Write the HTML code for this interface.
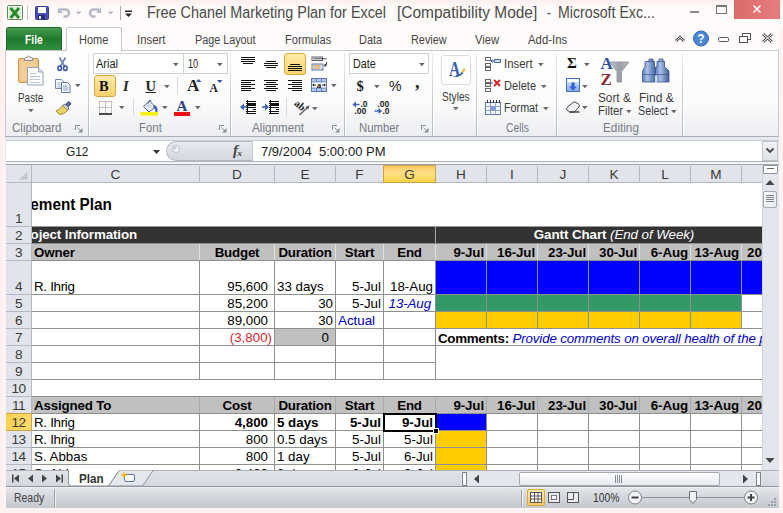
<!DOCTYPE html><html><head><meta charset="utf-8"><title>Excel</title><style>
*{box-sizing:border-box;margin:0;padding:0}
html,body{width:783px;height:513px;overflow:hidden}
body{background:#fdf3f2;font-family:"Liberation Sans",sans-serif;position:relative;color:#000}
.a{position:absolute}
.t{position:absolute;white-space:nowrap;line-height:1}
.ui{font-size:12px;color:#3b3b3b;transform-origin:0 50%}
.c{position:absolute;white-space:nowrap;font-size:13.33px;line-height:17px;height:17px;overflow:hidden}
.b{font-weight:bold}
.i{font-style:italic}
.r{text-align:right}
.ce{text-align:center}
.hl{position:absolute;height:1px;background:#c3c3c3}
.vl{position:absolute;width:1px;background:#c3c3c3}
.glab{position:absolute;font-size:12px;color:#6b7280;white-space:nowrap;line-height:1;text-align:center}
.arr{position:absolute;width:0;height:0;border-left:3px solid transparent;border-right:3px solid transparent;border-top:3px solid #666}
</style></head><body>
<div class="a" style="left:0;top:0;width:783px;height:27px;background:linear-gradient(#fdeeed,#fefaf9 7px,#fffcfb)"></div>
<div class="a" style="left:734px;top:0;width:46px;height:19px;background:linear-gradient(90deg,#dd6b6b,#e57c7c)"></div>
<svg class="a" style="left:734px;top:0" width="44" height="19"><path d="M19.500 5.500l7 7M26.500 5.500l-7 7" stroke="#fff" stroke-width="1.500" fill="none"/></svg>
<div class="a" style="left:716px;top:5px;width:11px;height:9px;border:1px solid #777;border-top:2px solid #777"></div>
<div class="a" style="left:690px;top:11px;width:9px;height:2px;background:#888"></div>
<div class="t" style="left:146.50px;top:5.04px;font-size:15.6px;color:#4a4a4a;transform-origin:0 0;transform:scaleX(0.9225);">Free Chanel Marketing Plan for Excel</div>
<div class="t" style="left:396.50px;top:5.04px;font-size:15.6px;color:#4a4a4a;transform-origin:0 0;transform:scaleX(0.9929);">[Compatibility Mode]</div>
<div class="t" style="left:546.60px;top:5.04px;font-size:15.6px;color:#4a4a4a;transform-origin:0 0;transform:scaleX(0.7429);">-</div>
<div class="t" style="left:557.50px;top:5.04px;font-size:15.6px;color:#4a4a4a;transform-origin:0 0;transform:scaleX(0.9087);">Microsoft Exc...</div>
<svg class="a" style="left:0;top:0" width="140" height="27">
<rect x="7.500" y="5.500" width="15" height="14" rx="1" fill="#f4faf0" stroke="#5d8a5a"/>
<rect x="9" y="7" width="12" height="11" fill="#dcefd6"/>
<path d="M10.500 8l8.500 10M19 8l-8.500 10" stroke="#2a8a2a" stroke-width="2.800"/>
<line x1="27.500" y1="6" x2="27.500" y2="20" stroke="#c4c4c8"/>
<rect x="35.500" y="6.500" width="13" height="13" rx="1" fill="#4a4fc0" stroke="#3a3e9a"/>
<rect x="38" y="7" width="8" height="6" fill="#fff"/>
<rect x="38" y="15" width="7" height="4.500" fill="#2a2d70"/><rect x="39" y="16" width="2" height="3" fill="#dfe3f5"/>
<path d="M60 9.500h5.500a3.500 3.500 0 0 1 0 7h-2" stroke="#b6bac8" stroke-width="2.600" fill="none"/><path d="M58 7v6h5z" fill="#b6bac8"/>
<path d="M76 11.500h5.500l-2.750 3z" fill="#b4b4b8"/>
<path d="M99 9.500h-5.500a3.500 3.500 0 0 0 0 7h2" stroke="#b6bac8" stroke-width="2.600" fill="none"/><path d="M101 7v6h-5z" fill="#b6bac8"/>
<path d="M108 11.500h5.500l-2.750 3z" fill="#b4b4b8"/>
<line x1="120.500" y1="6" x2="120.500" y2="20" stroke="#a9a9ae"/>
<rect x="125" y="10.500" width="7" height="1.500" fill="#222"/><path d="M125 13.500h7l-3.500 3.500z" fill="#222"/>
</svg>
<div class="a" style="left:0;top:27px;width:783px;height:23px;background:#fffbfa"></div>
<div class="a" style="left:0;top:0;width:3px;height:513px;background:#fdf0ef"></div>
<div class="a" style="left:6px;top:27px;width:56px;height:23px;border-radius:3px 3px 0 0;background:linear-gradient(#4a9c52,#1f7a2c 50%,#2f9040);border:1px solid #1d6b28;border-bottom:none"></div>
<div class="t" style="left:25.20px;top:33.56px;font-size:12px;color:#fff;transform-origin:0 0;transform:scaleX(0.8582);font-weight:bold;">File</div>
<div class="a" style="left:5px;top:50px;width:774px;height:86px;background:linear-gradient(#ffffff,#fbfbfc 60%,#eceef1);border:1px solid #c6c9cf;border-bottom:none"></div>
<div class="a" style="left:66px;top:27px;width:56px;height:24px;border-radius:3px 3px 0 0;background:#fff;border:1px solid #c3c6cc;border-bottom:none"></div>
<div class="t" style="left:79.40px;top:33.56px;font-size:12px;color:#454545;transform-origin:0 0;transform:scaleX(0.9187);">Home</div>
<div class="t" style="left:137.00px;top:33.56px;font-size:12px;color:#454545;transform-origin:0 0;transform:scaleX(0.9500);">Insert</div>
<div class="t" style="left:194.50px;top:33.56px;font-size:12px;color:#454545;transform-origin:0 0;transform:scaleX(0.8980);">Page Layout</div>
<div class="t" style="left:284.50px;top:33.56px;font-size:12px;color:#454545;transform-origin:0 0;transform:scaleX(0.9240);">Formulas</div>
<div class="t" style="left:359.30px;top:33.56px;font-size:12px;color:#454545;transform-origin:0 0;transform:scaleX(0.9103);">Data</div>
<div class="t" style="left:411.00px;top:33.56px;font-size:12px;color:#454545;transform-origin:0 0;transform:scaleX(0.9067);">Review</div>
<div class="t" style="left:475.40px;top:33.56px;font-size:12px;color:#454545;transform-origin:0 0;transform:scaleX(0.9314);">View</div>
<div class="t" style="left:528.00px;top:33.56px;font-size:12px;color:#454545;transform-origin:0 0;transform:scaleX(0.9474);">Add-Ins</div>
<div class="a" style="left:88px;top:53px;width:1px;height:83px;background:linear-gradient(#eceef1,#c6cad1 60%,#b4b8c0);"></div>
<div class="a" style="left:89px;top:53px;width:1px;height:83px;background:linear-gradient(rgba(255,255,255,0),#fff 60%);"></div>
<div class="a" style="left:230px;top:53px;width:1px;height:83px;background:linear-gradient(#eceef1,#c6cad1 60%,#b4b8c0);"></div>
<div class="a" style="left:231px;top:53px;width:1px;height:83px;background:linear-gradient(rgba(255,255,255,0),#fff 60%);"></div>
<div class="a" style="left:344px;top:53px;width:1px;height:83px;background:linear-gradient(#eceef1,#c6cad1 60%,#b4b8c0);"></div>
<div class="a" style="left:345px;top:53px;width:1px;height:83px;background:linear-gradient(rgba(255,255,255,0),#fff 60%);"></div>
<div class="a" style="left:432px;top:53px;width:1px;height:83px;background:linear-gradient(#eceef1,#c6cad1 60%,#b4b8c0);"></div>
<div class="a" style="left:433px;top:53px;width:1px;height:83px;background:linear-gradient(rgba(255,255,255,0),#fff 60%);"></div>
<div class="a" style="left:476px;top:53px;width:1px;height:83px;background:linear-gradient(#eceef1,#c6cad1 60%,#b4b8c0);"></div>
<div class="a" style="left:477px;top:53px;width:1px;height:83px;background:linear-gradient(rgba(255,255,255,0),#fff 60%);"></div>
<div class="a" style="left:556px;top:53px;width:1px;height:83px;background:linear-gradient(#eceef1,#c6cad1 60%,#b4b8c0);"></div>
<div class="a" style="left:557px;top:53px;width:1px;height:83px;background:linear-gradient(rgba(255,255,255,0),#fff 60%);"></div>
<div class="a" style="left:682px;top:53px;width:1px;height:83px;background:linear-gradient(#eceef1,#c6cad1 60%,#b4b8c0);"></div>
<div class="a" style="left:683px;top:53px;width:1px;height:83px;background:linear-gradient(rgba(255,255,255,0),#fff 60%);"></div>
<div class="t" style="left:11.50px;top:121.96px;font-size:12px;color:#767b84;transform-origin:0 0;transform:scaleX(0.9635);">Clipboard</div>
<svg class="a" style="left:75px;top:125px" width="8" height="8"><path d="M0.500 5v-4.500h4.500" stroke="#8a8f98" fill="none"/><path d="M3 7.500h4.500v-4.500z" fill="#8a8f98"/><path d="M2.500 2.500l3.500 3.500" stroke="#8a8f98"/></svg>
<div class="t" style="left:138.70px;top:121.96px;font-size:12px;color:#767b84;transform-origin:0 0;transform:scaleX(0.9500);">Font</div>
<svg class="a" style="left:218.5px;top:125px" width="8" height="8"><path d="M0.500 5v-4.500h4.500" stroke="#8a8f98" fill="none"/><path d="M3 7.500h4.500v-4.500z" fill="#8a8f98"/><path d="M2.500 2.500l3.500 3.500" stroke="#8a8f98"/></svg>
<div class="t" style="left:251.50px;top:121.96px;font-size:12px;color:#767b84;transform-origin:0 0;transform:scaleX(0.9742);">Alignment</div>
<svg class="a" style="left:331.5px;top:125px" width="8" height="8"><path d="M0.500 5v-4.500h4.500" stroke="#8a8f98" fill="none"/><path d="M3 7.500h4.500v-4.500z" fill="#8a8f98"/><path d="M2.500 2.500l3.500 3.500" stroke="#8a8f98"/></svg>
<div class="t" style="left:358.70px;top:121.96px;font-size:12px;color:#767b84;transform-origin:0 0;transform:scaleX(0.9455);">Number</div>
<svg class="a" style="left:420.5px;top:125px" width="8" height="8"><path d="M0.500 5v-4.500h4.500" stroke="#8a8f98" fill="none"/><path d="M3 7.500h4.500v-4.500z" fill="#8a8f98"/><path d="M2.500 2.500l3.500 3.500" stroke="#8a8f98"/></svg>
<div class="t" style="left:505.70px;top:121.96px;font-size:12px;color:#767b84;transform-origin:0 0;transform:scaleX(0.8638);">Cells</div>
<div class="t" style="left:602.60px;top:121.96px;font-size:12px;color:#767b84;transform-origin:0 0;transform:scaleX(0.9796);">Editing</div>
<svg class="a" style="left:16px;top:54px" width="30" height="34"><rect x="2.500" y="4.500" width="20" height="24" rx="1.500" fill="#efc382" stroke="#c79a4c"/><rect x="4.500" y="6.500" width="16" height="20" fill="#f3cf97"/><path d="M8.500 6.500v-2q0-1 1-1h1.500q0-1.500 1.500-1.500t1.500 1.500h1.500q1 0 1 1v2z" fill="#f0f0f0" stroke="#8a8a8a"/><path d="M11.500 13.500h11l4.500 4.500v13h-15.500z" fill="#fdfdfe" stroke="#93a3c4"/><path d="M22.500 13.500v4.500h4.500" fill="#dfe6f3" stroke="#93a3c4"/><path d="M14 19.500h7M14 22.500h10M14 25.500h10M14 28.500h10" stroke="#bcc8e0"/></svg>
<div class="t" style="left:18.00px;top:92.46px;font-size:12px;color:#3b3b3b;transform-origin:0 0;transform:scaleX(0.8261);">Paste</div>
<svg class="a" style="left:27.5px;top:108.9px" width="6" height="4"><path d="M0 0h5.600l-2.800 3.200z" fill="#666"/></svg>
<svg class="a" style="left:56px;top:56px" width="14" height="16"><path d="M3.500 1.500l5.500 9.500M9.500 1.500l-5.500 9.500" stroke="#6f86b8" stroke-width="1.700" fill="none"/><ellipse cx="3.700" cy="12.200" rx="1.800" ry="2.200" fill="none" stroke="#2f4fa8" stroke-width="1.500"/><ellipse cx="9.300" cy="12.200" rx="1.800" ry="2.200" fill="none" stroke="#2f4fa8" stroke-width="1.500"/></svg>
<svg class="a" style="left:55px;top:78px" width="17" height="15"><path d="M0.500 1.500h6l2.500 2.500v6.500h-8.500z" fill="#fff" stroke="#7189bd"/><path d="M2 5h4M2 7h5M2 9h5" stroke="#9fb2d8"/><path d="M6.500 4.500h6l2.500 2.500v7.500h-8.500z" fill="#fff" stroke="#5c76b0"/><path d="M8 8h4M8 10h5.500M8 12h5.500" stroke="#7d95c8"/></svg>
<svg class="a" style="left:74.8px;top:83.8px" width="6" height="4"><path d="M0 0h5.600l-2.800 3.200z" fill="#666"/></svg>
<svg class="a" style="left:55px;top:100px" width="17" height="16"><path d="M10.500 4.500l3.500-3 2 2.500-3.500 3z" fill="#5a6797" stroke="#3c4878"/><path d="M7.500 5.500l2.500-1.500 4 4-1.500 2.500z" fill="#c9ccd6" stroke="#6a7088"/><path d="M7.500 5.500l5 5q-3 4-8 4l-3.500-3.500q4-1 6.500-5.500z" fill="#efd46a" stroke="#a8882a"/></svg>
<div class="a" style="left:93px;top:53px;width:91px;height:21px;background:#fff;border:1px solid #cdd1d8"></div>
<div class="a" style="left:183px;top:53px;width:45px;height:21px;background:#fff;border:1px solid #cdd1d8"></div>
<div class="t" style="left:96.30px;top:58.26px;font-size:12px;color:#222;transform-origin:0 0;transform:scaleX(0.9167);">Arial</div>
<svg class="a" style="left:173.2px;top:62.5px" width="6" height="4"><path d="M0 0h5.600l-2.800 3.200z" fill="#666"/></svg>
<div class="t" style="left:188.20px;top:58.26px;font-size:12px;color:#222;transform-origin:0 0;transform:scaleX(0.7551);">10</div>
<svg class="a" style="left:216.7px;top:62.5px" width="6" height="4"><path d="M0 0h5.600l-2.800 3.200z" fill="#666"/></svg>
<div class="a" style="left:93.5px;top:75px;width:22.5px;height:22px;background:linear-gradient(#fde9a9,#fbd36e);border:1px solid #d8a944;border-radius:3px"></div>
<div class="t" style="left:99px;top:79px;font-family:'Liberation Serif',serif;font-weight:bold;font-size:14.5px;color:#111">B</div>
<div class="t" style="left:123px;top:79px;font-family:'Liberation Serif',serif;font-style:italic;font-weight:bold;font-size:14.5px;color:#222">I</div>
<div class="t" style="left:145.500px;top:79px;font-family:'Liberation Serif',serif;font-weight:bold;font-size:14.5px;color:#222;text-decoration:underline">U</div>
<svg class="a" style="left:164.2px;top:84.5px" width="6" height="4"><path d="M0 0h5.600l-2.800 3.200z" fill="#666"/></svg>
<div class="a" style="left:177px;top:77px;width:1px;height:18px;background:#d5d8de;"></div>
<div class="t" style="left:187px;top:77px;font-family:'Liberation Serif',serif;font-weight:bold;font-size:17px;color:#222">A</div>
<svg class="a" style="left:196px;top:78.500px" width="6" height="4"><path d="M0 3h5.500l-2.750-3z" fill="#3557a5"/></svg>
<div class="t" style="left:209.500px;top:82.500px;font-family:'Liberation Serif',serif;font-weight:bold;font-size:11.500px;color:#222">A</div>
<svg class="a" style="left:216.500px;top:79.500px" width="6" height="4"><path d="M0 0h5.500l-2.750 3z" fill="#3557a5"/></svg>
<svg class="a" style="left:99px;top:101px" width="14" height="14"><path d="M0.500 0.500h12v12M0.500 0.500v12M6.500 0.500v12M0.500 6.500h12" stroke="#8a8a8a" stroke-dasharray="1 1" fill="none"/><path d="M0 13h13" stroke="#111" stroke-width="1.500"/></svg>
<svg class="a" style="left:118.7px;top:106px" width="6" height="4"><path d="M0 0h5.600l-2.800 3.200z" fill="#666"/></svg>
<div class="a" style="left:132.5px;top:98px;width:1px;height:18px;background:#d5d8de;"></div>
<svg class="a" style="left:140px;top:99px" width="20" height="18"><path d="M3.500 7.500l6-5.500 6 6-6.500 5z" fill="#f2f5fb" stroke="#44588a"/><path d="M5.500 8l4-3.500 4.500 4.500z" fill="#c9d6ee"/><path d="M8 4.500q0.500-4 3.500-2.500" fill="none" stroke="#44588a"/><path d="M14.500 6q3.500 1.500 3 6.500q-1.200 1-2.200 0q0.200-3-2.300-5z" fill="#3f5fb5"/><rect x="0.500" y="13" width="17.500" height="3.600" fill="#f6ef12"/></svg>
<svg class="a" style="left:161.7px;top:106px" width="6" height="4"><path d="M0 0h5.600l-2.800 3.200z" fill="#666"/></svg>
<div class="t" style="left:176.500px;top:98.500px;font-family:'Liberation Serif',serif;font-weight:bold;font-size:15px;color:#2a3f7e">A</div>
<div class="a" style="left:174px;top:112px;width:16px;height:3.6px;background:#ee1111;"></div>
<svg class="a" style="left:194.7px;top:106px" width="6" height="4"><path d="M0 0h5.600l-2.800 3.200z" fill="#666"/></svg>
<div class="a" style="left:241px;top:57px;width:14px;height:1px;background:#111;"></div>
<div class="a" style="left:241px;top:59px;width:14px;height:1px;background:#111;"></div>
<div class="a" style="left:241px;top:61px;width:14px;height:1px;background:#111;"></div>
<div class="a" style="left:243px;top:63px;width:10px;height:1px;background:#111;"></div>
<div class="a" style="left:266px;top:61px;width:10px;height:1px;background:#111;"></div>
<div class="a" style="left:264px;top:63px;width:14px;height:1px;background:#111;"></div>
<div class="a" style="left:264px;top:65px;width:14px;height:1px;background:#111;"></div>
<div class="a" style="left:266px;top:67px;width:10px;height:1px;background:#111;"></div>
<div class="a" style="left:283.5px;top:53px;width:22px;height:22px;background:linear-gradient(#fde9a9,#fbd36e);border:1px solid #d8a944;border-radius:3px"></div>
<div class="a" style="left:289.5px;top:64px;width:10px;height:1px;background:#111;"></div>
<div class="a" style="left:287.5px;top:66px;width:14px;height:1px;background:#111;"></div>
<div class="a" style="left:287.5px;top:68px;width:14px;height:1px;background:#111;"></div>
<div class="a" style="left:287.5px;top:70px;width:14px;height:1px;background:#111;"></div>
<svg class="a" style="left:311px;top:55px" width="18" height="17"><rect x="1" y="2" width="10.500" height="3.500" fill="#fff" stroke="#5a6070"/><path d="M2.500 3.750h13" stroke="#444"/><rect x="1" y="9" width="11" height="6" fill="#dbe6f7" stroke="#5a78a8"/><path d="M2.500 10.800h7M2.500 13h7" stroke="#e8a030" stroke-width="1.200"/><path d="M15.500 7v3l-2 0" stroke="#444" fill="none"/><path d="M12.500 10.500l2.500-1.800v3.200z" fill="#444"/></svg>
<div class="a" style="left:241px;top:80px;width:14px;height:1px;background:#111;"></div>
<div class="a" style="left:241px;top:82px;width:10px;height:1px;background:#111;"></div>
<div class="a" style="left:241px;top:84px;width:14px;height:1px;background:#111;"></div>
<div class="a" style="left:241px;top:86px;width:10px;height:1px;background:#111;"></div>
<div class="a" style="left:241px;top:88px;width:14px;height:1px;background:#111;"></div>
<div class="a" style="left:241px;top:90px;width:10px;height:1px;background:#111;"></div>
<div class="a" style="left:264px;top:80px;width:14px;height:1px;background:#111;"></div>
<div class="a" style="left:266px;top:82px;width:10px;height:1px;background:#111;"></div>
<div class="a" style="left:264px;top:84px;width:14px;height:1px;background:#111;"></div>
<div class="a" style="left:266px;top:86px;width:10px;height:1px;background:#111;"></div>
<div class="a" style="left:264px;top:88px;width:14px;height:1px;background:#111;"></div>
<div class="a" style="left:266px;top:90px;width:10px;height:1px;background:#111;"></div>
<div class="a" style="left:287.5px;top:80px;width:14px;height:1px;background:#111;"></div>
<div class="a" style="left:291.5px;top:82px;width:10px;height:1px;background:#111;"></div>
<div class="a" style="left:287.5px;top:84px;width:14px;height:1px;background:#111;"></div>
<div class="a" style="left:291.5px;top:86px;width:10px;height:1px;background:#111;"></div>
<div class="a" style="left:287.5px;top:88px;width:14px;height:1px;background:#111;"></div>
<div class="a" style="left:291.5px;top:90px;width:10px;height:1px;background:#111;"></div>
<svg class="a" style="left:311px;top:78px" width="18" height="16"><rect x="0.500" y="0.500" width="15" height="13" fill="#b4c9ec" stroke="#5a78b8"/><path d="M0.500 4h15M0.500 10h15M5.500 0.500v3.500M10.500 0.500v3.500M5.500 10v3.500M10.500 10v3.500" stroke="#5f7ebc"/><rect x="1" y="4.500" width="14" height="5" fill="#fff"/><text x="8" y="9.500" font-size="9" font-weight="bold" text-anchor="middle" font-family="Liberation Serif,serif" fill="#111">a</text><path d="M1.500 7h3.500M11 7h3.500" stroke="#222"/><path d="M1.500 7l1.500-1.500v3zM14.500 7l-1.500-1.500v3z" fill="#222"/></svg>
<svg class="a" style="left:331px;top:84px" width="6" height="4"><path d="M0 0h5.600l-2.800 3.200z" fill="#666"/></svg>
<div class="a" style="left:246px;top:101px;width:10px;height:1px;background:#111;"></div>
<div class="a" style="left:246px;top:103px;width:10px;height:1px;background:#111;"></div>
<div class="a" style="left:246px;top:105px;width:10px;height:1px;background:#111;"></div>
<div class="a" style="left:246px;top:107px;width:10px;height:1px;background:#111;"></div>
<div class="a" style="left:246px;top:109px;width:10px;height:1px;background:#111;"></div>
<div class="a" style="left:246px;top:111px;width:10px;height:1px;background:#111;"></div>
<div class="a" style="left:246px;top:113px;width:10px;height:1px;background:#111;"></div>
<div class="a" style="left:248px;top:103px;width:8px;height:3px;background:#111;"></div>
<div class="a" style="left:248px;top:109px;width:5px;height:1px;background:#fff;"></div>
<div class="a" style="left:247px;top:100px;width:1px;height:1px;background:#111;"></div>
<div class="a" style="left:247px;top:102px;width:1px;height:1px;background:#111;"></div>
<div class="a" style="left:247px;top:104px;width:1px;height:1px;background:#111;"></div>
<div class="a" style="left:247px;top:106px;width:1px;height:1px;background:#111;"></div>
<div class="a" style="left:247px;top:108px;width:1px;height:1px;background:#111;"></div>
<div class="a" style="left:247px;top:110px;width:1px;height:1px;background:#111;"></div>
<div class="a" style="left:247px;top:112px;width:1px;height:1px;background:#111;"></div>
<div class="a" style="left:268.5px;top:101px;width:10px;height:1px;background:#111;"></div>
<div class="a" style="left:268.5px;top:103px;width:10px;height:1px;background:#111;"></div>
<div class="a" style="left:268.5px;top:105px;width:10px;height:1px;background:#111;"></div>
<div class="a" style="left:268.5px;top:107px;width:10px;height:1px;background:#111;"></div>
<div class="a" style="left:268.5px;top:109px;width:10px;height:1px;background:#111;"></div>
<div class="a" style="left:268.5px;top:111px;width:10px;height:1px;background:#111;"></div>
<div class="a" style="left:268.5px;top:113px;width:10px;height:1px;background:#111;"></div>
<div class="a" style="left:270.5px;top:103px;width:8px;height:3px;background:#111;"></div>
<div class="a" style="left:270.5px;top:109px;width:5px;height:1px;background:#fff;"></div>
<div class="a" style="left:269.5px;top:100px;width:1px;height:1px;background:#111;"></div>
<div class="a" style="left:269.5px;top:102px;width:1px;height:1px;background:#111;"></div>
<div class="a" style="left:269.5px;top:104px;width:1px;height:1px;background:#111;"></div>
<div class="a" style="left:269.5px;top:106px;width:1px;height:1px;background:#111;"></div>
<div class="a" style="left:269.5px;top:108px;width:1px;height:1px;background:#111;"></div>
<div class="a" style="left:269.5px;top:110px;width:1px;height:1px;background:#111;"></div>
<div class="a" style="left:269.5px;top:112px;width:1px;height:1px;background:#111;"></div>
<svg class="a" style="left:240px;top:103px" width="7" height="8"><path d="M7 4h-5" stroke="#3b62b8" stroke-width="1.600"/><path d="M4 0.500l-4 3.500 4 3.500z" fill="#3b62b8"/></svg>
<svg class="a" style="left:262px;top:103px" width="7" height="8"><path d="M0 4h5" stroke="#3b62b8" stroke-width="1.600"/><path d="M3 0.500l4 3.500-4 3.500z" fill="#3b62b8"/></svg>
<div class="a" style="left:285.5px;top:98px;width:1px;height:18px;background:#d5d8de;"></div>
<svg class="a" style="left:293px;top:98px;overflow:visible" width="20" height="19"><text x="0" y="0" font-size="10.500" font-weight="bold" font-family="Liberation Serif,serif" fill="#1a1a1a" transform="translate(0.500 6.500) rotate(40)">ab</text><path d="M6.500 17l8-7.500" stroke="#555" stroke-width="1.200"/><path d="M16.500 7.500l-4 1.200 2.800 2.800z" fill="#555"/></svg>
<svg class="a" style="left:312.2px;top:106.5px" width="6" height="4"><path d="M0 0h5.600l-2.800 3.200z" fill="#666"/></svg>
<div class="a" style="left:349px;top:53px;width:80px;height:21px;background:#fff;border:1px solid #cdd1d8"></div>
<div class="t" style="left:352.80px;top:58.26px;font-size:12px;color:#222;transform-origin:0 0;transform:scaleX(0.8946);">Date</div>
<svg class="a" style="left:418.7px;top:62.5px" width="6" height="4"><path d="M0 0h5.600l-2.800 3.200z" fill="#666"/></svg>
<div class="t" style="left:356.500px;top:79px;font-family:'Liberation Serif',serif;font-weight:bold;font-size:14.5px;color:#222">$</div>
<svg class="a" style="left:373.8px;top:84.5px" width="6" height="4"><path d="M0 0h5.600l-2.800 3.200z" fill="#666"/></svg>
<div class="t" style="left:389px;top:79px;font-size:14px;color:#222">%</div>
<div class="t" style="left:415px;top:73px;font-family:'Liberation Serif',serif;font-weight:bold;font-size:18px;color:#222">,</div>
<svg class="a" style="left:352px;top:100px" width="40" height="15" font-family="Liberation Sans,sans-serif" font-size="8.500" font-weight="bold" fill="#222"><path d="M1.500 4.500h6" stroke="#3b62b8" stroke-width="1.400"/><path d="M4 1.500l-3.500 3 3.500 3z" fill="#3b62b8"/><text x="8.500" y="7">.0</text><text x="2.500" y="14">.00</text><text x="25.500" y="7">.00</text><path d="M22.500 11h6" stroke="#3b62b8" stroke-width="1.400"/><path d="M26.500 8l3.500 3-3.500 3z" fill="#3b62b8"/><text x="30.500" y="14">.0</text></svg>
<div class="a" style="left:440.5px;top:54.5px;width:30px;height:30px;background:#fff;border:1px solid #d9dce2;border-radius:3px"></div>
<div class="t" style="left:448.500px;top:58.500px;font-family:'Liberation Serif',serif;font-weight:bold;font-size:21px;color:#3a5fb0;transform-origin:0 0;transform:scaleX(.74)">A</div>
<svg class="a" style="left:452px;top:66px" width="14" height="12"><path d="M1 10.500q5 0.500 9-5l1.500 1.500q-4 5-10.500 4z" fill="#3f63b5"/><path d="M9.500 5.500l2.500-3.500 1.500 1.500-2.500 3.500z" fill="#e8b93a"/></svg>
<div class="t" style="left:441.80px;top:91.46px;font-size:12px;color:#3b3b3b;transform-origin:0 0;transform:scaleX(0.8460);">Styles</div>
<svg class="a" style="left:452.8px;top:106.5px" width="6" height="4"><path d="M0 0h5.600l-2.800 3.200z" fill="#666"/></svg>
<svg class="a" style="left:484px;top:56px" width="18" height="16"><rect x="1.500" y="1.500" width="5" height="3" fill="#fff" stroke="#666"/><rect x="1.500" y="7.500" width="5" height="3" fill="#fff" stroke="#666"/><rect x="1.500" y="11.500" width="5" height="3" fill="#fff" stroke="#666"/><rect x="10.500" y="3.500" width="6" height="3" fill="#cfe0f7" stroke="#4a6fb5"/><path d="M10 5h-3M8.500 3.500l-1.500 1.500 1.500 1.500" stroke="#2b4fa0" fill="none"/></svg>
<svg class="a" style="left:484px;top:78px" width="18" height="16"><rect x="1.500" y="1.500" width="5" height="3" fill="#fff" stroke="#666"/><rect x="1.500" y="5.500" width="5" height="3" fill="#dfe6f3" stroke="#666"/><rect x="1.500" y="10.500" width="5" height="3" fill="#fff" stroke="#666"/><path d="M10 2l6 6M16 2l-6 6" stroke="#e02020" stroke-width="1.800"/><path d="M7 5h2" stroke="#2b4fa0"/></svg>
<svg class="a" style="left:484px;top:99px" width="18" height="17"><rect x="1.500" y="3.500" width="15" height="12" fill="#f4f7fc" stroke="#5a78b8"/><path d="M1.500 7.500h15M1.500 11.500h15M6.500 3.500v12M11.500 3.500v12" stroke="#8ea4d2"/><rect x="6.500" y="7.500" width="5" height="4" fill="#7d98d8"/><path d="M3.500 1v3M6.500 1v3M9.500 1v3M12.500 1v3M15.500 1v3" stroke="#333"/></svg>
<div class="t" style="left:504.40px;top:57.96px;font-size:12px;color:#3b3b3b;transform-origin:0 0;transform:scaleX(0.9533);">Insert</div>
<svg class="a" style="left:538px;top:62.5px" width="6" height="4"><path d="M0 0h5.600l-2.800 3.200z" fill="#666"/></svg>
<div class="t" style="left:504.40px;top:79.96px;font-size:12px;color:#3b3b3b;transform-origin:0 0;transform:scaleX(0.9237);">Delete</div>
<svg class="a" style="left:541.2px;top:84.5px" width="6" height="4"><path d="M0 0h5.600l-2.800 3.200z" fill="#666"/></svg>
<div class="t" style="left:504.40px;top:102.26px;font-size:12px;color:#3b3b3b;transform-origin:0 0;transform:scaleX(0.8974);">Format</div>
<svg class="a" style="left:543.2px;top:106.5px" width="6" height="4"><path d="M0 0h5.600l-2.800 3.200z" fill="#666"/></svg>
<div class="t" style="left:567px;top:56px;font-family:'Liberation Serif',serif;font-weight:bold;font-size:15px;color:#111">&Sigma;</div>
<svg class="a" style="left:584.2px;top:62.5px" width="6" height="4"><path d="M0 0h5.600l-2.800 3.200z" fill="#666"/></svg>
<svg class="a" style="left:565.500px;top:78px" width="15" height="15"><defs><linearGradient id="fd" x1="0" y1="0" x2="0" y2="1"><stop offset="0" stop-color="#e6effc"/><stop offset="1" stop-color="#7fa8e8"/></linearGradient></defs><rect x="0.500" y="0.500" width="13" height="13" fill="url(#fd)" stroke="#4a6fb5"/><rect x="1.500" y="1.500" width="11" height="2.500" fill="#fff"/><path d="M5.500 4.500h3v4h2.500l-4 4-4-4h2.500z" fill="#2f63c8"/></svg>
<svg class="a" style="left:582.2px;top:84.5px" width="6" height="4"><path d="M0 0h5.600l-2.800 3.200z" fill="#666"/></svg>
<svg class="a" style="left:565px;top:101px" width="17" height="13"><path d="M8 1.500q1.500-1 3 0l3 2q1 1 0 2.500l-4.500 5h-5l-2.500-2q-1-1.500 0-2.500z" fill="#f4f5f8" stroke="#444"/><path d="M4.500 11h10" stroke="#333" stroke-width="1.300"/></svg>
<svg class="a" style="left:582.2px;top:106px" width="6" height="4"><path d="M0 0h5.600l-2.800 3.200z" fill="#666"/></svg>
<svg class="a" style="left:608px;top:60px" width="24" height="24"><defs><linearGradient id="fn" x1="0" y1="0" x2="1" y2="0"><stop offset="0" stop-color="#c4c7ce"/><stop offset="0.500" stop-color="#9a9ea7"/><stop offset="1" stop-color="#b9bcc4"/></linearGradient></defs><path d="M1.500 2h19.500l-7.500 9.500v10.500h-4.500v-10.500z" fill="url(#fn)" stroke="#8b8f98" stroke-width="0.800"/></svg>
<div class="t" style="left:600.500px;top:55px;font-family:'Liberation Serif',serif;font-weight:bold;font-size:17px;color:#2b4fa0;text-shadow:0 0 1px #fff">A</div>
<div class="t" style="left:600.500px;top:70.500px;font-family:'Liberation Serif',serif;font-weight:bold;font-size:17px;color:#8a3030">Z</div>
<div class="t" style="left:598.00px;top:92.46px;font-size:12px;color:#3b3b3b;transform-origin:0 0;transform:scaleX(0.9828);">Sort &amp;</div>
<div class="t" style="left:598.00px;top:105.46px;font-size:12px;color:#3b3b3b;transform-origin:0 0;transform:scaleX(0.9390);">Filter</div>
<svg class="a" style="left:626.2px;top:110px" width="6" height="4"><path d="M0 0h5.600l-2.800 3.200z" fill="#666"/></svg>
<svg class="a" style="left:641px;top:58px" width="30" height="26"><defs><linearGradient id="bn" x1="0" y1="0" x2="1" y2="0"><stop offset="0" stop-color="#5f7fbe"/><stop offset="0.350" stop-color="#a9c0e6"/><stop offset="1" stop-color="#3f5f9e"/></linearGradient></defs><g fill="url(#bn)" stroke="#3a548c" stroke-width="0.800"><rect x="12" y="9" width="6" height="7"/><path d="M8 1h4v2.500h1.500v5l1.500 2v13.500h-13.500v-11l2.500-4.500v-5h4z"/><path d="M18 1h4v2.500h1.500v5l4.500 4.500v11h-13.500v-13.500l1.500-2v-5h2z"/></g><path d="M2 16.500h12.500M15.500 16.500h12.500M6.500 3.500h7M16.500 3.500h7" stroke="#3a548c" stroke-width="0.700"/><path d="M15 17.500v7.500" stroke="#f6f7f9" stroke-width="1.600"/></svg>
<div class="t" style="left:639.00px;top:92.46px;font-size:12px;color:#3b3b3b;transform-origin:0 0;transform:scaleX(1.0051);">Find &amp;</div>
<div class="t" style="left:638.00px;top:105.46px;font-size:12px;color:#3b3b3b;transform-origin:0 0;transform:scaleX(0.8989);">Select</div>
<svg class="a" style="left:671.2px;top:110px" width="6" height="4"><path d="M0 0h5.600l-2.800 3.200z" fill="#666"/></svg>
<svg class="a" style="left:674px;top:30px" width="104" height="18"><path d="M2 11l4-4 4 4" stroke="#555" stroke-width="2.600" fill="none"/><path d="M2 11l4-4 4 4" stroke="#fff" stroke-width="0.800" fill="none"/><path d="M2.500 11.500h8" stroke="#999" stroke-width="0"/><circle cx="27" cy="8.500" r="7.500" fill="#4a86d8" stroke="#2f66b8"/><text x="27" y="13" font-size="12" font-weight="bold" text-anchor="middle" fill="#fff" font-family="Liberation Sans,sans-serif">?</text><rect x="44.500" y="7.500" width="10" height="4" rx="1" fill="#fff" stroke="#555"/><rect x="68.500" y="3.500" width="8" height="6" fill="#fff" stroke="#555"/><rect x="65.500" y="6.500" width="8" height="6" fill="#fff" stroke="#555"/><path d="M89 4l9 8M98 4l-9 8" stroke="#555" stroke-width="3"/><path d="M89 4l9 8M98 4l-9 8" stroke="#fff" stroke-width="1"/></svg>
<div class="a" style="left:5px;top:137px;width:774px;height:28px;background:#e6e9ee;"></div>
<div class="a" style="left:5px;top:136px;width:774px;height:1px;background:#a9adb5;"></div>
<div class="a" style="left:6px;top:141px;width:756px;height:20px;background:#fff;"></div>
<div class="a" style="left:6px;top:140px;width:773px;height:1px;background:#c9cdd4;"></div>
<div class="a" style="left:6px;top:161px;width:773px;height:1px;background:#b0b5bd;"></div>
<div class="a" style="left:6px;top:162px;width:773px;height:2px;background:#f3f4f7;"></div>
<div class="a" style="left:6px;top:164px;width:773px;height:1px;background:#a2a7b0;"></div>
<div class="t" style="left:65.50px;top:145.38px;font-size:13.33px;color:#222;transform-origin:0 0;transform:scaleX(0.8911);">G12</div>
<svg class="a" style="left:153px;top:150px" width="8" height="5"><path d="M0 0h7l-3.500 4z" fill="#333"/></svg>
<div class="a" style="left:166px;top:141px;width:86px;height:20px;background:linear-gradient(#e6e9ee,#d4d8df);border:1px solid #b4b8c0;border-right:none;border-radius:10px 0 0 10px"></div>
<svg class="a" style="left:170px;top:143px" width="12" height="12"><circle cx="6" cy="6" r="3.500" fill="#f4f5f7" stroke="#b9bdc5"/><circle cx="5" cy="5" r="1.500" fill="#c9ccd3"/></svg>
<div class="t" style="left:233px;top:143px;font-family:'Liberation Serif',serif;font-style:italic;font-weight:bold;font-size:15px;color:#444">f<span style="font-size:9px;position:relative;top:0.5px;left:-0.5px">x</span></div>
<div class="a" style="left:252px;top:141px;width:1px;height:20px;background:#c9cdd4;"></div>
<div class="t" style="left:260.70px;top:145.38px;font-size:13.33px;color:#1a1a1a;transform-origin:0 0;transform:scaleX(0.9775);white-space:pre;">7/9/2004  5:00:00 PM</div>
<div class="a" style="left:762px;top:141px;width:16px;height:20px;background:linear-gradient(#f1f2f5,#dfe2e8);border:1px solid #c0c4cb"></div>
<svg class="a" style="left:765px;top:147px" width="10" height="8"><path d="M1.500 1.500l3.500 3.500 3.500-3.500" stroke="#444" stroke-width="1.800" fill="none"/></svg>
<div class="a" style="left:6px;top:165px;width:756px;height:305px;background:#fff"></div>
<div class="a" style="left:6px;top:165px;width:756px;height:18px;background:#e1e5eb;"></div>
<div class="a" style="left:6px;top:183px;width:26px;height:287px;background:#e1e5eb;"></div>
<div class="a" style="left:6px;top:182px;width:756px;height:1px;background:#b4b9c1;"></div>
<div class="a" style="left:31px;top:165px;width:1px;height:305px;background:#b4b9c1;"></div>
<div class="a" style="left:199px;top:166px;width:1px;height:16px;background:#b4b9c1;"></div>
<div class="a" style="left:274px;top:166px;width:1px;height:16px;background:#b4b9c1;"></div>
<div class="a" style="left:335px;top:166px;width:1px;height:16px;background:#b4b9c1;"></div>
<div class="a" style="left:383px;top:166px;width:1px;height:16px;background:#b4b9c1;"></div>
<div class="a" style="left:435px;top:166px;width:1px;height:16px;background:#b4b9c1;"></div>
<div class="a" style="left:486px;top:166px;width:1px;height:16px;background:#b4b9c1;"></div>
<div class="a" style="left:537px;top:166px;width:1px;height:16px;background:#b4b9c1;"></div>
<div class="a" style="left:588px;top:166px;width:1px;height:16px;background:#b4b9c1;"></div>
<div class="a" style="left:639px;top:166px;width:1px;height:16px;background:#b4b9c1;"></div>
<div class="a" style="left:690px;top:166px;width:1px;height:16px;background:#b4b9c1;"></div>
<div class="a" style="left:741px;top:166px;width:1px;height:16px;background:#b4b9c1;"></div>
<div class="a" style="left:6px;top:226px;width:25px;height:1px;background:#b4b9c1;"></div>
<div class="a" style="left:6px;top:243px;width:25px;height:1px;background:#b4b9c1;"></div>
<div class="a" style="left:6px;top:260px;width:25px;height:1px;background:#b4b9c1;"></div>
<div class="a" style="left:6px;top:294px;width:25px;height:1px;background:#b4b9c1;"></div>
<div class="a" style="left:6px;top:311px;width:25px;height:1px;background:#b4b9c1;"></div>
<div class="a" style="left:6px;top:328px;width:25px;height:1px;background:#b4b9c1;"></div>
<div class="a" style="left:6px;top:345px;width:25px;height:1px;background:#b4b9c1;"></div>
<div class="a" style="left:6px;top:362px;width:25px;height:1px;background:#b4b9c1;"></div>
<div class="a" style="left:6px;top:379px;width:25px;height:1px;background:#b4b9c1;"></div>
<div class="a" style="left:6px;top:396px;width:25px;height:1px;background:#b4b9c1;"></div>
<div class="a" style="left:6px;top:413px;width:25px;height:1px;background:#b4b9c1;"></div>
<div class="a" style="left:6px;top:430px;width:25px;height:1px;background:#b4b9c1;"></div>
<div class="a" style="left:6px;top:447px;width:25px;height:1px;background:#b4b9c1;"></div>
<div class="a" style="left:6px;top:464px;width:25px;height:1px;background:#b4b9c1;"></div>
<div class="a" style="left:6px;top:481px;width:25px;height:1px;background:#b4b9c1;"></div>
<div class="a" style="left:383px;top:165px;width:53px;height:18px;background:linear-gradient(#f8cb66,#ffe185 45%,#ffd24c);border:1px solid #d2a048"></div>
<div class="a" style="left:6px;top:413px;width:26px;height:18px;background:linear-gradient(90deg,#ffd052,#ffdb6c);border:1px solid #cf9f45;border-left:none"></div>
<div class="c ce" style="left:32px;top:166px;width:167px;font-size:13.6px;color:#3a3a3a">C</div>
<div class="c ce" style="left:200px;top:166px;width:74px;font-size:13.6px;color:#3a3a3a">D</div>
<div class="c ce" style="left:275px;top:166px;width:60px;font-size:13.6px;color:#3a3a3a">E</div>
<div class="c ce" style="left:336px;top:166px;width:47px;font-size:13.6px;color:#3a3a3a">F</div>
<div class="c ce" style="left:384px;top:166px;width:51px;font-size:13.6px;color:#3a3a3a">G</div>
<div class="c ce" style="left:436px;top:166px;width:50px;font-size:13.6px;color:#3a3a3a">H</div>
<div class="c ce" style="left:487px;top:166px;width:50px;font-size:13.6px;color:#3a3a3a">I</div>
<div class="c ce" style="left:538px;top:166px;width:50px;font-size:13.6px;color:#3a3a3a">J</div>
<div class="c ce" style="left:589px;top:166px;width:50px;font-size:13.6px;color:#3a3a3a">K</div>
<div class="c ce" style="left:640px;top:166px;width:50px;font-size:13.6px;color:#3a3a3a">L</div>
<div class="c ce" style="left:691px;top:166px;width:50px;font-size:13.6px;color:#3a3a3a">M</div>
<div class="c ce" style="left:6px;top:211px;width:25px;font-size:13.6px;letter-spacing:-0.5px;color:#3a3a3a;height:16px;line-height:16px">1</div>
<div class="c ce" style="left:6px;top:228px;width:25px;font-size:13.6px;letter-spacing:-0.5px;color:#3a3a3a;height:16px;line-height:16px">2</div>
<div class="c ce" style="left:6px;top:245px;width:25px;font-size:13.6px;letter-spacing:-0.5px;color:#3a3a3a;height:16px;line-height:16px">3</div>
<div class="c ce" style="left:6px;top:279px;width:25px;font-size:13.6px;letter-spacing:-0.5px;color:#3a3a3a;height:16px;line-height:16px">4</div>
<div class="c ce" style="left:6px;top:296px;width:25px;font-size:13.6px;letter-spacing:-0.5px;color:#3a3a3a;height:16px;line-height:16px">5</div>
<div class="c ce" style="left:6px;top:313px;width:25px;font-size:13.6px;letter-spacing:-0.5px;color:#3a3a3a;height:16px;line-height:16px">6</div>
<div class="c ce" style="left:6px;top:330px;width:25px;font-size:13.6px;letter-spacing:-0.5px;color:#3a3a3a;height:16px;line-height:16px">7</div>
<div class="c ce" style="left:6px;top:347px;width:25px;font-size:13.6px;letter-spacing:-0.5px;color:#3a3a3a;height:16px;line-height:16px">8</div>
<div class="c ce" style="left:6px;top:364px;width:25px;font-size:13.6px;letter-spacing:-0.5px;color:#3a3a3a;height:16px;line-height:16px">9</div>
<div class="c ce" style="left:6px;top:381px;width:25px;font-size:13.6px;letter-spacing:-0.5px;color:#3a3a3a;height:16px;line-height:16px">10</div>
<div class="c ce" style="left:6px;top:398px;width:25px;font-size:13.6px;letter-spacing:-0.5px;color:#3a3a3a;height:16px;line-height:16px">11</div>
<div class="c ce" style="left:6px;top:415px;width:25px;font-size:13.6px;letter-spacing:-0.5px;color:#3a3a3a;height:16px;line-height:16px">12</div>
<div class="c ce" style="left:6px;top:432px;width:25px;font-size:13.6px;letter-spacing:-0.5px;color:#3a3a3a;height:16px;line-height:16px">13</div>
<div class="c ce" style="left:6px;top:449px;width:25px;font-size:13.6px;letter-spacing:-0.5px;color:#3a3a3a;height:16px;line-height:16px">14</div>
<div class="c ce" style="left:6px;top:466px;width:25px;font-size:13.6px;letter-spacing:-0.5px;color:#3a3a3a;height:16px;line-height:16px">15</div>
<svg class="a" style="left:6px;top:165px" width="26" height="18"><path d="M21.500 6.500v8h-8.500z" fill="#c3c8d0"/></svg>
<div class="a" style="left:32px;top:190px;width:300px;height:30px;overflow:hidden"><div class="t b" style="left:-11.5px;top:7px;font-size:16px;transform-origin:0 0;transform:scaleX(.955)">gement Plan</div></div>
<div class="a" style="left:32px;top:227px;width:730px;height:17px;background:#333333;"></div>
<div class="a" style="left:435px;top:227px;width:1px;height:17px;background:#a6a6a6;"></div>
<div class="c b" style="left:32px;top:226px;width:300px;color:#fff"><span style="margin-left:-6.5px;letter-spacing:-0.1px">roject Information</span></div>
<div class="c b ce" style="left:437px;top:226px;width:354px;color:#fff;letter-spacing:-0.06px">Gantt Chart <span class="i" style="font-weight:normal">(End of Week)</span></div>
<div class="a" style="left:32px;top:244px;width:730px;height:17px;background:#c0c0c0;"></div>
<div class="a" style="left:199px;top:244px;width:1px;height:17px;background:#dedede;"></div>
<div class="a" style="left:274px;top:244px;width:1px;height:17px;background:#dedede;"></div>
<div class="a" style="left:335px;top:244px;width:1px;height:17px;background:#dedede;"></div>
<div class="a" style="left:383px;top:244px;width:1px;height:17px;background:#dedede;"></div>
<div class="a" style="left:435px;top:244px;width:1px;height:17px;background:#dedede;"></div>
<div class="a" style="left:486px;top:244px;width:1px;height:17px;background:#dedede;"></div>
<div class="a" style="left:537px;top:244px;width:1px;height:17px;background:#dedede;"></div>
<div class="a" style="left:588px;top:244px;width:1px;height:17px;background:#dedede;"></div>
<div class="a" style="left:639px;top:244px;width:1px;height:17px;background:#dedede;"></div>
<div class="a" style="left:690px;top:244px;width:1px;height:17px;background:#dedede;"></div>
<div class="a" style="left:741px;top:244px;width:1px;height:17px;background:#dedede;"></div>
<div class="a" style="left:32px;top:397px;width:730px;height:17px;background:#c0c0c0;"></div>
<div class="a" style="left:199px;top:397px;width:1px;height:17px;background:#aaaaaa;"></div>
<div class="a" style="left:274px;top:397px;width:1px;height:17px;background:#aaaaaa;"></div>
<div class="a" style="left:335px;top:397px;width:1px;height:17px;background:#aaaaaa;"></div>
<div class="a" style="left:383px;top:397px;width:1px;height:17px;background:#aaaaaa;"></div>
<div class="a" style="left:435px;top:397px;width:1px;height:17px;background:#aaaaaa;"></div>
<div class="a" style="left:486px;top:397px;width:1px;height:17px;background:#aaaaaa;"></div>
<div class="a" style="left:537px;top:397px;width:1px;height:17px;background:#aaaaaa;"></div>
<div class="a" style="left:588px;top:397px;width:1px;height:17px;background:#aaaaaa;"></div>
<div class="a" style="left:639px;top:397px;width:1px;height:17px;background:#aaaaaa;"></div>
<div class="a" style="left:690px;top:397px;width:1px;height:17px;background:#aaaaaa;"></div>
<div class="a" style="left:741px;top:397px;width:1px;height:17px;background:#aaaaaa;"></div>
<div class="c b" style="left:34px;top:244px;width:163px;letter-spacing:-0.15px">Owner</div>
<div class="c b ce" style="left:202px;top:244px;width:70px;letter-spacing:-0.2px">Budget</div>
<div class="c b ce" style="left:277px;top:244px;width:56px;letter-spacing:-0.2px">Duration</div>
<div class="c b ce" style="left:338px;top:244px;width:43px;letter-spacing:-0.2px">Start</div>
<div class="c b ce" style="left:386px;top:244px;width:47px;letter-spacing:-0.2px">End</div>
<div class="c b r" style="left:438px;top:244px;width:46px;letter-spacing:-0.1px">9-Jul</div>
<div class="c b r" style="left:489px;top:244px;width:46px;letter-spacing:-0.1px">16-Jul</div>
<div class="c b r" style="left:540px;top:244px;width:46px;letter-spacing:-0.1px">23-Jul</div>
<div class="c b r" style="left:591px;top:244px;width:46px;letter-spacing:-0.1px">30-Jul</div>
<div class="c b r" style="left:642px;top:244px;width:46px;letter-spacing:-0.1px">6-Aug</div>
<div class="c b r" style="left:693px;top:244px;width:46px;letter-spacing:-0.1px">13-Aug</div>
<div class="c b" style="left:747px;top:244px;width:28px;">20</div>
<div class="c b" style="left:34px;top:397px;width:163px;letter-spacing:-0.15px">Assigned To</div>
<div class="c b ce" style="left:202px;top:397px;width:70px;letter-spacing:-0.2px">Cost</div>
<div class="c b ce" style="left:277px;top:397px;width:56px;letter-spacing:-0.2px">Duration</div>
<div class="c b ce" style="left:338px;top:397px;width:43px;letter-spacing:-0.2px">Start</div>
<div class="c b ce" style="left:386px;top:397px;width:47px;letter-spacing:-0.2px">End</div>
<div class="c b r" style="left:438px;top:397px;width:46px;letter-spacing:-0.1px">9-Jul</div>
<div class="c b r" style="left:489px;top:397px;width:46px;letter-spacing:-0.1px">16-Jul</div>
<div class="c b r" style="left:540px;top:397px;width:46px;letter-spacing:-0.1px">23-Jul</div>
<div class="c b r" style="left:591px;top:397px;width:46px;letter-spacing:-0.1px">30-Jul</div>
<div class="c b r" style="left:642px;top:397px;width:46px;letter-spacing:-0.1px">6-Aug</div>
<div class="c b r" style="left:693px;top:397px;width:46px;letter-spacing:-0.1px">13-Aug</div>
<div class="c b" style="left:747px;top:397px;width:28px;">20</div>
<div class="a" style="left:436px;top:261px;width:326px;height:33px;background:#0000ff;"></div>
<div class="a" style="left:436px;top:295px;width:306px;height:16px;background:#339966;"></div>
<div class="a" style="left:436px;top:312px;width:306px;height:16px;background:#ffcc00;"></div>
<div class="a" style="left:436px;top:414px;width:50px;height:16px;background:#0000ff;"></div>
<div class="a" style="left:436px;top:431px;width:50px;height:16px;background:#ffcc00;"></div>
<div class="a" style="left:436px;top:448px;width:50px;height:16px;background:#ffcc00;"></div>
<div class="a" style="left:436px;top:465px;width:50px;height:5px;background:#ffcc00;"></div>
<div class="a" style="left:32px;top:260px;width:730px;height:1px;background:#8f8f8f;"></div>
<div class="a" style="left:32px;top:294px;width:730px;height:1px;background:#8f8f8f;"></div>
<div class="a" style="left:32px;top:311px;width:730px;height:1px;background:#8f8f8f;"></div>
<div class="a" style="left:32px;top:328px;width:730px;height:1px;background:#8f8f8f;"></div>
<div class="a" style="left:32px;top:345px;width:730px;height:1px;background:#8f8f8f;"></div>
<div class="a" style="left:32px;top:362px;width:730px;height:1px;background:#8f8f8f;"></div>
<div class="a" style="left:32px;top:379px;width:730px;height:1px;background:#8f8f8f;"></div>
<div class="a" style="left:32px;top:243px;width:730px;height:1px;background:#8e8e8e;"></div>
<div class="a" style="left:32px;top:226px;width:730px;height:1px;background:#9a9a9a;"></div>
<div class="a" style="left:32px;top:396px;width:730px;height:1px;background:#8f8f8f;"></div>
<div class="a" style="left:32px;top:413px;width:730px;height:1px;background:#8f8f8f;"></div>
<div class="a" style="left:32px;top:430px;width:730px;height:1px;background:#8f8f8f;"></div>
<div class="a" style="left:32px;top:447px;width:730px;height:1px;background:#8f8f8f;"></div>
<div class="a" style="left:32px;top:464px;width:730px;height:1px;background:#8f8f8f;"></div>
<div class="a" style="left:436px;top:346px;width:326px;height:33px;background:#fff;"></div>
<div class="a" style="left:199px;top:261px;width:1px;height:119px;background:#8f8f8f;"></div>
<div class="a" style="left:274px;top:261px;width:1px;height:119px;background:#8f8f8f;"></div>
<div class="a" style="left:335px;top:261px;width:1px;height:119px;background:#8f8f8f;"></div>
<div class="a" style="left:383px;top:261px;width:1px;height:119px;background:#8f8f8f;"></div>
<div class="a" style="left:435px;top:261px;width:1px;height:119px;background:#8f8f8f;"></div>
<div class="a" style="left:486px;top:261px;width:1px;height:68px;background:#8f8f8f;"></div>
<div class="a" style="left:537px;top:261px;width:1px;height:68px;background:#8f8f8f;"></div>
<div class="a" style="left:588px;top:261px;width:1px;height:68px;background:#8f8f8f;"></div>
<div class="a" style="left:639px;top:261px;width:1px;height:68px;background:#8f8f8f;"></div>
<div class="a" style="left:690px;top:261px;width:1px;height:68px;background:#8f8f8f;"></div>
<div class="a" style="left:741px;top:261px;width:1px;height:68px;background:#8f8f8f;"></div>
<div class="a" style="left:199px;top:414px;width:1px;height:56px;background:#8f8f8f;"></div>
<div class="a" style="left:274px;top:414px;width:1px;height:56px;background:#8f8f8f;"></div>
<div class="a" style="left:335px;top:414px;width:1px;height:56px;background:#8f8f8f;"></div>
<div class="a" style="left:383px;top:414px;width:1px;height:56px;background:#8f8f8f;"></div>
<div class="a" style="left:435px;top:414px;width:1px;height:56px;background:#8f8f8f;"></div>
<div class="a" style="left:486px;top:414px;width:1px;height:56px;background:#8f8f8f;"></div>
<div class="a" style="left:537px;top:414px;width:1px;height:56px;background:#8f8f8f;"></div>
<div class="a" style="left:588px;top:414px;width:1px;height:56px;background:#8f8f8f;"></div>
<div class="a" style="left:639px;top:414px;width:1px;height:56px;background:#8f8f8f;"></div>
<div class="a" style="left:690px;top:414px;width:1px;height:56px;background:#8f8f8f;"></div>
<div class="a" style="left:741px;top:414px;width:1px;height:56px;background:#8f8f8f;"></div>
<div class="a" style="left:275px;top:329px;width:60px;height:16px;background:#c0c0c0;"></div>
<div class="c " style="left:34px;top:278px;width:163px;letter-spacing:-0.3px">R. Ihrig</div>
<div class="c r" style="left:206px;top:278px;width:62px;">95,600</div>
<div class="c " style="left:277px;top:278px;width:56px;">33 days</div>
<div class="c r" style="left:338px;top:278px;width:43px;">5-Jul</div>
<div class="c r" style="left:386px;top:278px;width:47px;">18-Aug</div>
<div class="c r" style="left:206px;top:295px;width:62px;">85,200</div>
<div class="c r" style="left:277px;top:295px;width:56px;">30</div>
<div class="c r" style="left:338px;top:295px;width:43px;">5-Jul</div>
<div class="c r" style="left:386px;top:295px;width:47px;"><span class="i" style="color:#0000cc;padding-right:2px;letter-spacing:-0.1px">13-Aug</span></div>
<div class="c r" style="left:206px;top:312px;width:62px;">89,000</div>
<div class="c r" style="left:277px;top:312px;width:56px;">30</div>
<div class="c " style="left:338px;top:312px;width:43px;"><span style="color:#0000cc">Actual</span></div>
<div class="c r" style="left:202px;top:329px;width:70px;"><span style="color:#dc1f2a">(3,800)</span></div>
<div class="c r" style="left:281px;top:329px;width:48px;">0</div>
<div class="c " style="left:34px;top:414px;width:163px;letter-spacing:-0.3px">R. Ihrig</div>
<div class="c r b" style="left:206px;top:414px;width:62px;">4,800</div>
<div class="c  b" style="left:277px;top:414px;width:56px;">5 days</div>
<div class="c r b" style="left:338px;top:414px;width:43px;">5-Jul</div>
<div class="c r b" style="left:386px;top:414px;width:47px;">9-Jul</div>
<div class="c " style="left:34px;top:431px;width:163px;letter-spacing:-0.3px">R. Ihrig</div>
<div class="c r" style="left:206px;top:431px;width:62px;">800</div>
<div class="c " style="left:277px;top:431px;width:56px;">0.5 days</div>
<div class="c r" style="left:338px;top:431px;width:43px;">5-Jul</div>
<div class="c r" style="left:386px;top:431px;width:47px;">5-Jul</div>
<div class="c " style="left:34px;top:448px;width:163px;">S. Abbas</div>
<div class="c r" style="left:206px;top:448px;width:62px;">800</div>
<div class="c " style="left:277px;top:448px;width:56px;">1 day</div>
<div class="c r" style="left:338px;top:448px;width:43px;">5-Jul</div>
<div class="c r" style="left:386px;top:448px;width:47px;">6-Jul</div>
<div class="c " style="left:34px;top:465px;width:163px;">S. Abbas</div>
<div class="c r" style="left:206px;top:465px;width:62px;">2,400</div>
<div class="c " style="left:277px;top:465px;width:56px;">3 days</div>
<div class="c r" style="left:338px;top:465px;width:43px;">6-Jul</div>
<div class="c r" style="left:386px;top:465px;width:47px;">9-Jul</div>
<div class="c" style="left:438px;top:330px;width:324px"><b style="letter-spacing:-0.28px">Comments:</b> <span class="i" style="color:#0000cc;letter-spacing:-0.14px">Provide comments on overall health of the project</span></div>
<div class="a" style="left:383px;top:413px;width:54px;height:19px;border:2px solid #000"></div>
<div class="a" style="left:434px;top:429px;width:4px;height:4px;background:#000;border:1px solid #fff;box-sizing:content-box;left:433px;top:428px"></div>
<div class="a" style="left:762px;top:165px;width:17px;height:305px;background:#e3e6ec;"></div>
<div class="a" style="left:762px;top:165px;width:1px;height:305px;background:#d0d4db;"></div>
<div class="a" style="left:763px;top:165px;width:15px;height:9px;background:#fff;border:1px solid #8d929b;border-radius:1px"></div>
<div class="a" style="left:767px;top:168px;width:7px;height:1px;background:#666;"></div>
<svg class="a" style="left:762px;top:176px" width="16" height="12"><path d="M3.500 9l4.500-5 4.500 5z" fill="#444"/></svg>
<div class="a" style="left:763px;top:191px;width:14px;height:17px;background:linear-gradient(90deg,#fdfdfe,#e8ebf0);border:1px solid #a4a9b2;border-radius:2px"></div>
<div class="a" style="left:766px;top:195px;width:8px;height:1px;background:#7a7f88;"></div>
<div class="a" style="left:766px;top:197px;width:8px;height:1px;background:#7a7f88;"></div>
<div class="a" style="left:766px;top:199px;width:8px;height:1px;background:#7a7f88;"></div>
<div class="a" style="left:766px;top:201px;width:8px;height:1px;background:#7a7f88;"></div>
<svg class="a" style="left:762px;top:455px" width="16" height="12"><path d="M3.500 3l4.500 5 4.500-5z" fill="#444"/></svg>
<div class="a" style="left:6px;top:470px;width:773px;height:17px;background:linear-gradient(#e1e5ea,#d3d7de);"></div>
<div class="a" style="left:6px;top:470px;width:773px;height:1px;background:#a9aeb7;"></div>
<svg class="a" style="left:6px;top:470px" width="64" height="17"><g fill="#444"><rect x="6" y="4.500" width="1.500" height="8"/><path d="M13 4.500v8l-5-4z"/><path d="M27 4.500v8l-5-4z"/><path d="M36 4.500v8l5-4z"/><path d="M50 4.500v8l5-4z"/><rect x="55.500" y="4.500" width="1.500" height="8"/></g></svg>
<svg class="a" style="left:68px;top:470px" width="100" height="17"><path d="M0.500 0v13q0 3 3 3h37l11-16z" fill="#fff" stroke="#8d929b"/><path d="M40.500 16l11-16h34l-11 16z" fill="#e4e8ed" stroke="#8d929b"/><rect x="56.500" y="4.500" width="10" height="7" rx="1.500" fill="#fff" stroke="#5a6ea8"/><path d="M56 1.500l1 2.500 2.500 1-2.500 1-1 2.500-1-2.500-2.500-1 2.500-1z" fill="#f5b400"/></svg>
<div class="a" style="left:69px;top:470px;width:50px;height:1px;background:#fff;"></div>
<div class="t" style="left:78.70px;top:472.48px;font-size:13.33px;color:#333;transform-origin:0 0;transform:scaleX(0.8743);font-weight:bold;">Plan</div>
<div class="a" style="left:461px;top:471px;width:301px;height:16px;background:#e3e6ec;"></div>
<div class="a" style="left:462px;top:472px;width:5px;height:14px;background:#fff;border:1px solid #7d828b"></div>
<svg class="a" style="left:470px;top:471px" width="12" height="16"><path d="M9 3.500v9l-5-4.500z" fill="#444"/></svg>
<div class="a" style="left:519px;top:472px;width:201px;height:14px;background:linear-gradient(#fdfdfe,#e6e9ee);border:1px solid #a4a9b2;border-radius:2px"></div>
<div class="a" style="left:615px;top:475px;width:1px;height:8px;background:#8a8f98;"></div>
<div class="a" style="left:617px;top:475px;width:1px;height:8px;background:#8a8f98;"></div>
<div class="a" style="left:619px;top:475px;width:1px;height:8px;background:#8a8f98;"></div>
<div class="a" style="left:621px;top:475px;width:1px;height:8px;background:#8a8f98;"></div>
<svg class="a" style="left:740px;top:471px" width="12" height="16"><path d="M3 3.500v9l5-4.500z" fill="#444"/></svg>
<div class="a" style="left:756px;top:472px;width:5px;height:14px;background:#fff;border:1px solid #7d828b"></div>
<div class="a" style="left:6px;top:487px;width:773px;height:21px;background:linear-gradient(#e4e7eb,#d3d7dd 50%,#c4c8cf);"></div>
<div class="a" style="left:6px;top:486px;width:773px;height:1px;background:#8f949d;"></div>
<div class="a" style="left:6px;top:487px;width:773px;height:1px;background:#eef0f3;"></div>
<div class="t" style="left:14.20px;top:491.76px;font-size:12px;color:#444;transform-origin:0 0;transform:scaleX(0.8719);">Ready</div>
<div class="a" style="left:54px;top:489px;width:1px;height:18px;background:#9aa0a9;"></div>
<div class="a" style="left:55px;top:489px;width:1px;height:18px;background:#f2f3f5;"></div>
<div class="a" style="left:521px;top:490px;width:1px;height:16px;background:#9aa0a9;"></div>
<div class="a" style="left:522px;top:490px;width:1px;height:16px;background:#f2f3f5;"></div>
<div class="a" style="left:527px;top:489px;width:18px;height:17px;background:linear-gradient(#fde9a9,#f9c95c);border:1px solid #d9a93a;border-radius:2px"></div>
<svg class="a" style="left:527px;top:489px" width="56" height="17"><rect x="3.500" y="3.500" width="11" height="10" fill="#fff" stroke="#555"/><path d="M3.500 7h11M3.500 10h11M7.500 3.500v10M11 3.500v10" stroke="#555" stroke-width="1"/><rect x="21.500" y="3.500" width="11" height="10" fill="#e9ebef" stroke="#555"/><rect x="24.500" y="6.500" width="5" height="4" fill="#fff" stroke="#777"/><rect x="40.500" y="3.500" width="11" height="10" fill="#e9ebef" stroke="#555"/><path d="M46.500 3.500v7h-6" stroke="#555" fill="none"/></svg>
<div class="t" style="left:592.50px;top:491.76px;font-size:12px;color:#333;transform-origin:0 0;transform:scaleX(0.8618);">100%</div>
<svg class="a" style="left:624px;top:488px" width="140" height="20"><line x1="18" y1="9.500" x2="120" y2="9.500" stroke="#8d929b"/><circle cx="11" cy="9.500" r="6.500" fill="#f2f3f5" stroke="#7d828b"/><rect x="7.500" y="8.500" width="7" height="2" fill="#444"/><circle cx="127" cy="9.500" r="6.500" fill="#f2f3f5" stroke="#7d828b"/><rect x="123.500" y="8.500" width="7" height="2" fill="#444"/><rect x="126" y="6" width="2" height="7" fill="#444"/><path d="M65.500 3.500h7v8l-3.500 4-3.500-4z" fill="#f2f3f5" stroke="#6d727b"/></svg>
<svg class="a" style="left:766px;top:496px" width="12" height="12"><g fill="#9aa0a9"><rect x="8" y="2" width="2" height="2"/><rect x="5" y="5" width="2" height="2"/><rect x="8" y="5" width="2" height="2"/><rect x="2" y="8" width="2" height="2"/><rect x="5" y="8" width="2" height="2"/><rect x="8" y="8" width="2" height="2"/></g></svg>
<div class="a" style="left:0px;top:508px;width:783px;height:5px;background:#fdf3f2;"></div>
<div class="a" style="left:779px;top:27px;width:4px;height:486px;background:#fdf3f2;"></div>
</body></html>
